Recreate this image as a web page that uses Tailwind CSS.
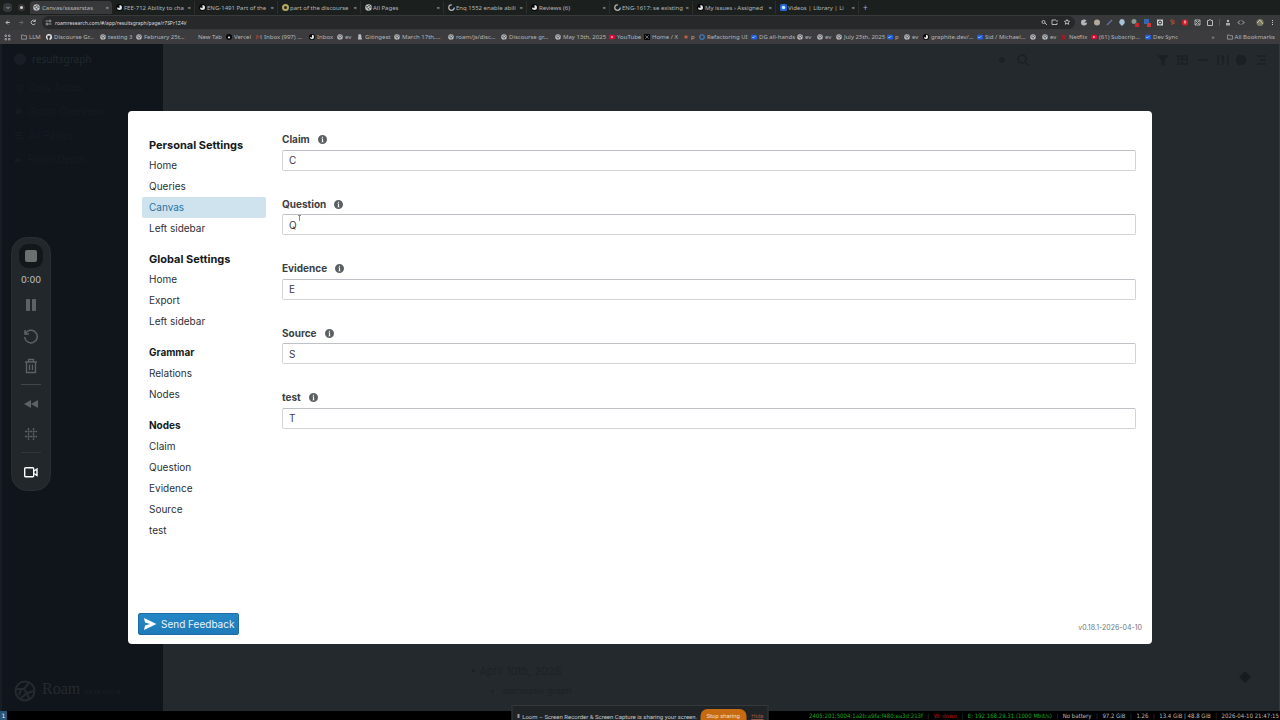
<!DOCTYPE html>
<html lang="en">
<head>
<meta charset="utf-8">
<title>Canvas settings</title>
<script src="https://cdn.jsdelivr.net/npm/@tailwindcss/browser@4"></script>
</head>
<body class="relative flex h-screen flex-col overflow-hidden bg-[#24292d] font-['Inter',sans-serif]">
<svg class="hidden">
  <symbol id="roam" viewBox="0 0 14 14"><circle cx="7" cy="7" r="6.5" fill="#c3c4c6"/><path d="M2 5h4l2-3M8 2l3 4-4 3-4-2M7 9l1 4M11 6l2 2" fill="none" stroke="#37383b" stroke-width="1.3"/></symbol>
  <symbol id="black" viewBox="0 0 14 14"><circle cx="7" cy="7" r="7" fill="#050607"/><path d="M7 2a5 5 0 1 1-5 5l5 1z" fill="#e5e5e5"/></symbol>
  <symbol id="vercel" viewBox="0 0 14 14"><circle cx="7" cy="7" r="7" fill="#050607"/><path d="M7 4l3 6H4z" fill="#fff"/></symbol>
  <symbol id="github" viewBox="0 0 14 14"><circle cx="7" cy="7" r="7" fill="#e8e8e8"/><path d="M4 3l2 1h2l2-1v5l-2 2v4H5v-2l-2-1 2-1-2-2z" fill="#303134"/></symbol>
  <symbol id="ring" viewBox="0 0 14 14"><circle cx="7" cy="7" r="5.5" fill="none" stroke="#b4b5b5" stroke-width="2.5" stroke-dasharray="26 9"/></symbol>
  <symbol id="bluering" viewBox="0 0 14 14"><circle cx="7" cy="7" r="5.3" fill="none" stroke="#3f82c9" stroke-width="2.6"/></symbol>
  <symbol id="yellow" viewBox="0 0 14 14"><circle cx="7" cy="7" r="7" fill="#b8a95e"/><circle cx="7" cy="7" r="3" fill="#292b25"/></symbol>
  <symbol id="folder" viewBox="0 0 14 14"><path d="M1 2.5h4.5L7 4h6v8H1z" fill="none" stroke="#b2b3b5" stroke-width="1.6"/></symbol>
  <symbol id="gmail" viewBox="0 0 14 14"><path d="M2 12V3l5 5 5-5" fill="none" stroke="#c14439" stroke-width="2"/><path d="M12 3v9" stroke="#8e9494" stroke-width="2"/></symbol>
  <symbol id="youtube" viewBox="0 0 14 14"><rect y="2" width="14" height="10" rx="3" fill="#d60d35"/><path d="M5.5 4.5 10 7l-4.500 2.500z" fill="#fff"/></symbol>
  <symbol id="x" viewBox="0 0 14 14"><path fill="#07080a" d="M0 0h14v14H0z"/><path d="m3 3 8 8M11 3 3 11" stroke="#ccc" stroke-width="1.2"/></symbol>
  <symbol id="orange" viewBox="0 0 14 14"><path d="M2 3h10v8H2z" fill="#6b4238"/><path d="M4 7h6M7 4v6" stroke="#e47e54" stroke-width="2"/></symbol>
  <symbol id="blue" viewBox="0 0 14 14"><rect y="2" width="14" height="11" rx="3" fill="#2460d8"/><path d="M3 8h4l3-3" stroke="#c9dafa" stroke-width="1.8" fill="none"/></symbol>
  <symbol id="video" viewBox="0 0 14 14"><rect width="14" height="14" rx="3" fill="#2465d7"/><circle cx="7" cy="7" r="3.500" fill="#d5e4ff"/></symbol>
  <symbol id="git" viewBox="0 0 14 14"><path d="M3 3c0-4 7-3 7 0v4l2 6H2l1-5z" fill="#b7bbc1"/></symbol>
  <symbol id="netflix" viewBox="0 0 14 14"><path d="M4 1v12M4 1l6 12M10 1v12" stroke="#b51322" stroke-width="2.500"/></symbol>
  <symbol id="none" viewBox="0 0 14 14"></symbol>
  <symbol id="info" viewBox="0 0 16 16"><path fill="#5b6063" fill-rule="evenodd" d="M8 0a8 8 0 1 1 0 16A8 8 0 0 1 8 0ZM7 3v2h2V3H7ZM6 6v1h1v5H6v1h4v-1H9V6H6Z"/></symbol>
</svg>

<header class="shrink-0 font-['Noto_Sans',sans-serif] text-[6px] leading-[14px] text-[#b4b6b8]">
  <nav id="tabs" aria-label="Tabs" class="flex h-[15px] items-center bg-[#1b201f] pr-2">
    <button aria-label="Search tabs" class="ml-[3px] flex h-[9px] w-[9px] items-center justify-center rounded-sm bg-[#34393b]"><svg class="h-1 w-1" viewBox="0 0 8 8"><path d="m1 2 3 3 3-3" fill="none" stroke="#ccc" stroke-width="1.500"/></svg></button>
    <span class="mr-[5px] ml-[6px] h-[7px] w-[7px] rounded-full border-2 border-[#3c3535] bg-[#d3d3d3]"></span>
  </nav>
  <div class="flex h-[15px] items-center bg-[#38393b]">
    <svg class="h-[9px] w-[42px] shrink-0" viewBox="0 0 42 9" fill="none" stroke="#b5b6b8" stroke-width="1"><path d="M10 4.500H6m2-2-2 2 2 2"/><path d="M19 4.500h4m-2-2 2 2-2 2" stroke="#626466"/><path d="M35 3a2.200 2.200 0 1 0 .3 2.500M35.300 1.500V3.500h-2"/></svg>
    <label class="flex h-[13px] grow items-center rounded-full bg-[#27282a] pl-[3px]">
      <svg class="mr-[3px] h-[7px] w-[7px]" viewBox="0 0 14 14" fill="none" stroke="#bbb" stroke-width="1.500"><path d="M1 4h6M7 10h6"/><circle cx="10" cy="4" r="2"/><circle cx="4" cy="10" r="2"/></svg>
      <input aria-label="Address" class="h-3 grow bg-transparent text-[5px] text-[#dcdddf] outline-none" value="roamresearch.com/#/app/resultsgraph/page/r7SPr1Z4V">
      <svg class="h-[9px] w-[36px]" viewBox="0 0 36 9" fill="none" stroke="#c4c5c7" stroke-width=".9"><circle cx="4.500" cy="4" r="1.500"/><path d="m6 5 2 2M17 2h-4v4.500h5V5M18 2v2M28 1.500l.8 1.600 1.800.2-1.300 1.200.4 1.800-1.700-.9-1.700.9.400-1.800-1.300-1.200 1.800-.2z"/></svg>
    </label>
    <svg class="h-[13px] w-[205px] shrink-0" viewBox="0 0 205 13">
      <circle cx="9" cy="6.500" r="3" fill="#b3b8b4"/><path d="M9 6.500h3v-2z" fill="#232c28"/>
      <circle cx="22" cy="6.500" r="3" fill="#b4a99c"/>
      <path d="m32 9 5-5" stroke="#6770a2" stroke-width="1.500"/>
      <path d="M47 3a3 3 0 0 1 2 5l-2 2-2-2a3 3 0 0 1 2-5" fill="#a8c3d6"/>
      <circle cx="59" cy="5.500" r="2.500" fill="#8a9690"/><path fill="#ca2929" d="M60 7h4v4h-4z"/>
      <path fill="#3567b1" d="M69 3h5v5h-5z"/><path fill="#cf3932" d="M72 7h4v4h-4z"/>
      <path fill="#ccc" d="M82 3.500h6v6h-6z"/><circle cx="85" cy="6.500" r="1.500" fill="none" stroke="#222"/>
      <path d="m95 4 4 4M97 3v6M99 4v4" stroke="#b64b3c" stroke-width="1"/>
      <rect x="107" y="3.500" width="6" height="6" rx="2" fill="#cf202b"/><path d="M110 4.500v3" stroke="#fff"/>
      <path d="M120 4h5v5h-5zM120 4l5 5M125 4l-5 5" fill="none" stroke="#aaa"/>
      <path d="M132.500 4.500h1.500a1 1 0 0 1 2 0h1.500v5h-5z" fill="none" stroke="#b8b9ba"/>
      <path d="M144.500 3v7" stroke="#545658"/>
      <circle cx="153" cy="5" r="1.200" fill="#b8b9ba"/><path fill="#a5a7a9" d="M151 7h4v2.500h-4z"/>
      <path d="m165 4.500-2 2 2 2m2-4 2 2-2 2" fill="none" stroke="#b8b9ba"/>
      <circle cx="185" cy="6.500" r="3.500" fill="#787a64"/><path d="m182 7 3-3 3 4" stroke="#c7bea2" fill="none"/>
      <path d="M197.500 4v1m0 1v1m0 1v1" stroke="#ccc"/>
    </svg>
  </div>
  <nav id="bookmarks" aria-label="Bookmarks" class="flex h-[14px] items-center bg-[#3c3c3e] whitespace-nowrap">
    <svg class="ml-1 mr-[10px] h-[7px] w-[7px] shrink-0" viewBox="0 0 14 14" fill="none" stroke="#94969a" stroke-width="2"><path d="M2 2h3v3H2zM9 2h3v3H9zM2 9h3v3H2zM9 9h3v3H9z"/></svg>
  </nav>
</header>

<main class="relative flex min-h-0 grow">
  <aside class="flex w-[163px] flex-col justify-between border-l-2 border-[#151e25] bg-[#0f151a] text-[#1c2228]">
    <div class="px-3 pt-[7px] text-[10px] leading-6">
      <div class="flex h-4 items-center gap-[6px] font-['Noto_Sans',sans-serif] text-[10px] text-[#22282f]"><span class="h-3 w-3 rounded-full bg-[#191e24]"></span>resultsgraph</div>
      <div class="mt-2 text-[#151b21]"><p>◷ &nbsp;Daily Notes</p><p>✱ &nbsp;Graph Overview</p><p>☰ &nbsp;All Pages</p><p>▰ &nbsp;Roam Depot</p></div>
    </div>
    <div class="flex items-center gap-[6px] pb-[7px] pl-3">
      <svg class="h-[22px] w-[22px]" viewBox="0 0 22 22" fill="none" stroke="#252a30" stroke-width="2"><circle cx="11" cy="11" r="9.500"/><path d="M2 9h8l5-6M10 9l3 4 7-2M13 13l-7 6M7 9l-2 6M13 13l2 6"/></svg>
      <p class="font-['Liberation_Serif',serif] text-[16px] leading-6 text-[#252a30]">Roam <span class="text-[7px] text-[#1a2026]">RESEARCH</span></p>
    </div>
  </aside>
  <section class="flex grow flex-col justify-between border-r border-[#1d4350]">
    <div class="flex justify-end pt-2 pr-2">
      <svg class="h-4 w-[280px]" viewBox="0 0 280 16" fill="none" stroke="#1b2024" stroke-width="1.500"><circle cx="11" cy="8" r="2" fill="#1a2829"/><circle cx="31" cy="7" r="4"/><path d="m34 10 3 3"/><path d="M168 4h8l-3 4v5l-2-1V8z" fill="#1b2024"/><path d="M187 4h9v8h-9zM187 7h9M191 4v8M207 8h10M227 3v10M232 3v10M237 3v10M230 6h4"/><circle cx="250" cy="8" r="4.500" fill="#1b2024"/><path d="M266 4h9M269 8h6M266 12h9"/></svg>
    </div>
    <div class="flex justify-between pr-7 pb-[10px] pl-[307px] text-[#1d2226]">
      <div class="text-[11px] leading-5"><p>• April 10th, 2026</p><p class="pl-5 text-[9px]">• &nbsp; discourse graph</p></div>
      <svg class="mb-2 h-3 w-3 self-center" viewBox="0 0 12 12"><path d="m6 0 6 6-6 6-6-6z" fill="#171c20"/></svg>
    </div>
  </section>

  <div class="absolute inset-0 flex items-center justify-center">
    <div role="dialog" aria-label="Settings" class="flex h-4/5 w-4/5 flex-col rounded-[4px] bg-white">
      <div class="flex min-h-0 grow">
        <nav aria-label="Settings sections" class="w-[138px] shrink-0 pt-[24px] pl-[14px] text-[10px] leading-[21px] text-[#2b3135]">
          <h2 class="h-5 px-[7px] text-[11px] leading-5 font-bold text-[#15191c]">Personal Settings</h2>
          <a href="#" class="block px-[7px]">Home</a><a href="#" class="block px-[7px]">Queries</a><a href="#" aria-current="page" class="block rounded-[2px] bg-[#cfe3ee] px-[7px] text-[#2673a3]">Canvas</a><a href="#" class="block px-[7px]">Left sidebar</a>
          <h2 class="mt-[10px] h-5 px-[7px] text-[11px] leading-[21px] font-bold text-[#15191c]">Global Settings</h2>
          <a href="#" class="block px-[7px]">Home</a><a href="#" class="block px-[7px]">Export</a><a href="#" class="block px-[7px]">Left sidebar</a>
          <h3 class="mt-[10px] px-[7px] font-bold text-[#15191c]">Grammar</h3>
          <a href="#" class="block px-[7px]">Relations</a><a href="#" class="block px-[7px]">Nodes</a>
          <h3 class="mt-[10px] px-[7px] font-bold text-[#15191c]">Nodes</h3>
          <a href="#" class="block px-[7px]">Claim</a><a href="#" class="block px-[7px]">Question</a><a href="#" class="block px-[7px]">Evidence</a><a href="#" class="block px-[7px]">Source</a><a href="#" class="block px-[7px]">test</a>
        </nav>
        <form id="fields" class="mt-5 mr-4 ml-4 flex h-[298px] grow flex-col justify-between text-[10px] text-[#3b4043]"></form>
      </div>
      <footer class="flex items-center justify-between pr-[10px] pb-[9px] pl-[10px]">
        <button class="flex h-[22px] items-center gap-1 rounded-[2px] border border-[#1d6ca4] bg-linear-to-b from-[#2587c6] to-[#1e7ab8] px-1 text-[10px] text-[#e9f4fb]"><svg class="h-[14px] w-[14px]" viewBox="0 0 14 14"><path d="m1 1 12.500 6L1 13l1-4.500L7 7 2 5.500z" fill="#fff"/></svg>Send Feedback</button>
        <small class="mt-2 text-[7px] text-[#71777b]">v0.18.1-2026-04-10</small>
      </footer>
    </div>
  </div>

  <svg class="absolute top-[171px] left-[298px] h-[6px] w-[4px]" viewBox="0 0 4 6"><path d="M0 .5h3M1.500.5V6" stroke="#888" fill="none"/></svg>

  <div role="toolbar" aria-label="Recorder" class="absolute top-[193px] left-[11px] flex h-[254px] w-10 flex-col items-center rounded-[16px] border border-[#292e32] bg-[#22272b] text-[#5d6265]">
    <button aria-label="Stop" class="mt-[6px] flex h-6 w-6 items-center justify-center rounded-[9px] bg-[#12171b]"><span class="h-3 w-3 rounded-[2px] bg-[#6c6f70]"></span></button>
    <time class="mt-1 text-[9px] leading-4 font-medium text-[#adb0b2]">0:00</time>
    <button aria-label="Pause" class="mt-[10px]"><svg class="h-[14px] w-[14px]" viewBox="0 0 14 14" fill="currentColor"><rect x="2" y="1" width="4" height="12" rx="1"/><rect x="8" y="1" width="4" height="12" rx="1"/></svg></button>
    <button aria-label="Restart" class="mt-4"><svg class="h-4 w-4" viewBox="0 0 16 16" fill="none" stroke="currentColor" stroke-width="1.500"><path d="M2 2v4h4M2.500 5.500A6.300 6.300 0 1 1 1.700 9"/></svg></button>
    <button aria-label="Delete" class="mt-[14px]"><svg class="h-4 w-4" viewBox="0 0 16 16" fill="none" stroke="currentColor" stroke-width="1.300"><path d="M2 4h12M5.500 4V1.500h5V4M3.500 4v10.500h9V4M6.500 6.500v5.500M9.500 6.500v5.500"/></svg></button>
    <hr class="mt-[10px] w-5 border-[#414649]">
    <button aria-label="Rewind" class="mt-[11px]"><svg class="h-4 w-4" viewBox="0 0 16 16" fill="currentColor"><path d="m8 4v8L1 8zM15 4v8L8 8z"/></svg></button>
    <button aria-label="Effects" class="mt-[14px]"><svg class="h-4 w-4" viewBox="0 0 16 16" fill="none" stroke="currentColor" stroke-width="1.300"><path d="M5.500 2v12M10.500 2v12M2 5.500h12M2 10.500h12" stroke-dasharray="2 .6"/></svg></button>
    <hr class="mt-[10px] w-5 border-[#303539]">
    <button aria-label="Camera" class="mt-[11px] text-white"><svg class="h-4 w-4" viewBox="0 0 16 16" fill="none" stroke="currentColor" stroke-width="1.400"><rect x="1.700" y="3.700" width="9" height="9" rx="1"/><path d="M11 7l3-2v6.500l-3-2"/></svg></button>
  </div>
</main>

<footer class="flex h-[9px] shrink-0 items-center justify-between bg-black font-['DejaVu_Sans_Condensed','DejaVu_Sans',sans-serif] text-[6px] leading-[9px] whitespace-nowrap">
  <span class="w-[7px] bg-[#285577] text-center text-white">1</span>
  <div class="flex w-[471px] justify-between pr-[1px] text-[#bdbdbd]"><span class="text-[#16a81f]">2405:201:5004:1a2b:a9fa:f480:ea3d:213f</span><span class="text-[#444]">|</span><span class="text-[#b51616]">W: down</span><span class="text-[#444]">|</span><span class="text-[#16a81f]">E: 192.168.29.31 (1000 Mbit/s)</span><span class="text-[#444]">|</span><span>No battery</span><span class="text-[#444]">|</span><span>97.2 GiB</span><span class="text-[#444]">|</span><span>1.26</span><span class="text-[#444]">|</span><span>13.4 GiB | 48.8 GiB</span><span class="text-[#444]">|</span><span>2026-04-10 21:47:15</span></div>
</footer>

<div role="status" class="absolute bottom-0 left-1/2 flex h-[15px] w-[257px] -translate-x-1/2 items-start gap-[3px] border border-b-0 border-[#33383b] bg-[#202427] pt-[3px] pl-[5px] font-['Roboto',sans-serif] text-[6px] whitespace-nowrap text-[#c4c6c7]">
  <span class="mt-[5px] h-1 w-[2px] bg-[#999]"></span><span class="grow leading-[15px]">Loom – Screen Recorder &amp; Screen Capture is sharing your screen.</span>
  <button class="h-[11px] w-[46px] shrink-0 rounded-t-[7px] bg-[#c66b12] pt-[3px] text-[6px] leading-[8px] text-[#f6dfc5]">Stop sharing</button><button class="mr-1 ml-[2px] pt-[3px] text-[6px] leading-[8px] text-[#8d5442] underline">Hide</button>
</div>

<script>
const icon = (id, cls) => `<svg class="${cls}"><use href="#${id}"/></svg>`;
const tabs = [["roam","Canvas/sssasrstas"],["black","FEE-712 Ability to cha"],["black","ENG-1491 Part of the"],["yellow","part of the discourse"],["roam","All Pages"],["ring","Enq 1552 enable abili"],["black","Reviews (6)"],["ring","ENG-1617: se existing"],["black","My issues › Assigned"],["video","Videos | Library | Li"]];
document.getElementById("tabs").insertAdjacentHTML("beforeend", tabs.map(([i, t], n) =>
  `<div class="${n ? "flex h-[13px] w-[83px] shrink-0 items-center gap-px border-r border-[#2a2f2e] pr-[3px] pl-1" : "flex h-[13px] w-[82px] shrink-0 items-center gap-[2px] rounded-t-[4px] bg-[#38393b] px-[3px]"}">${icon(i, "h-[7px] w-[7px] shrink-0")}<a href="#" class="grow whitespace-nowrap">${t}</a><button aria-label="Close">×</button></div>`).join("") + `<button aria-label="New tab" class="ml-1 text-[8px]">+</button>`);

const marks = [["folder","LLM","w-[25px]"],["github","Discourse Gr…","w-[54px]"],["roam","testing 3","w-[36px]"],["roam","February 25t…","w-[54px]"],["none","New Tab","w-[36px]"],["vercel","Vercel","w-[30px]"],["gmail","Inbox (997) …","w-[53px]"],["black","Inbox","w-[28px]"],["roam","ev","w-[20px]"],["git","Gitingest","w-[37px]"],["roam","March 17th,…","w-[54px]"],["roam","roam/js/disc…","w-[53px]"],["roam","Discourse gr…","w-[54px]"],["roam","May 13th, 2025","w-[54px]"],["youtube","YouTube","w-[35px]"],["x","Home / X","w-[39px]"],["orange","p","w-[16px]"],["bluering","Refactoring UI","w-[52px]"],["blue","DG all-hands","w-[46px]"],["roam","ev","w-[20px]"],["roam","ev","w-[19px]"],["roam","July 25th, 2025","w-[51px]"],["blue","p","w-[17px]"],["roam","ev","w-[19px]"],["black","graphite.dev/…","w-[54px]"],["blue","Sid / Michael…","w-[53px]"],["roam","","w-[12px]"],["roam","ev","w-[19px]"],["netflix","Netflix","w-[30px]"],["youtube","(61) Subscrip…","w-[54px]"],["blue","Dev Sync","w-[40px]"]];
document.getElementById("bookmarks").insertAdjacentHTML("beforeend", marks.map(([i, t, w]) =>
  `<a href="#" class="flex shrink-0 items-center gap-[2px] ${w}">${icon(i, "h-[6px] w-[6px] shrink-0")}${t}</a>`).join("") +
  `<span class="ml-auto mr-3">»</span><a href="#" class="mr-[5px] flex items-center gap-[2px]">${icon("folder", "h-[6px] w-[6px] shrink-0")}All Bookmarks</a>`);

document.getElementById("fields").innerHTML = [["Claim","C"],["Question","Q"],["Evidence","E"],["Source","S"],["test","T"]].map(([l, v]) =>
  `<div><div class="flex h-[18px] items-center gap-2"><label for="f-${l}" class="font-bold">${l}</label>${icon("info", "h-[9px] w-[9px]")}</div><input id="f-${l}" value="${v}" class="mt-px block h-[21px] w-full rounded-[2px] border border-[#d2d5d8] border-t-[#bec2c6] bg-white px-[6px] text-[10px] outline-none"></div>`).join("");
</script>
</body>
</html>
